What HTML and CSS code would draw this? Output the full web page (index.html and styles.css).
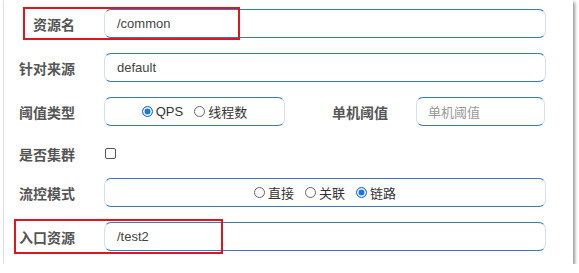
FILE: index.html
```html
<!DOCTYPE html>
<html lang="zh-CN">
<head>
    <meta charset="UTF-8">
    <title>新增流控规则</title>
    <link rel="stylesheet" href="styles.css">
</head>
<body>
    <div class="panel">
        <div class="row">
            <label class="row-label">资源名</label>
            <div class="field">/common</div>
            <div class="mark mark-top"></div>
        </div>

        <div class="row">
            <label class="row-label">针对来源</label>
            <div class="field">default</div>
        </div>

        <div class="row">
            <label class="row-label">阈值类型</label>
            <div class="field field-radios field-short">
                <span class="opt"><span class="dot checked"></span>QPS</span>
                <span class="opt"><span class="dot"></span>线程数</span>
            </div>
            <label class="row-label side-label">单机阈值</label>
            <div class="field field-count placeholder">单机阈值</div>
        </div>

        <div class="row row-check">
            <label class="row-label">是否集群</label>
            <span class="check"></span>
        </div>

        <div class="row">
            <label class="row-label">流控模式</label>
            <div class="field field-radios">
                <span class="opt"><span class="dot"></span>直接</span>
                <span class="opt"><span class="dot"></span>关联</span>
                <span class="opt"><span class="dot checked"></span>链路</span>
            </div>
        </div>

        <div class="row">
            <label class="row-label">入口资源</label>
            <div class="field">/test2</div>
            <div class="mark mark-bottom"></div>
        </div>
    </div>
</body>
</html>
```

FILE: styles.css
```css
body {
    margin: 0;
    background: #fff;
    font-family: "Liberation Sans", "Noto Sans CJK SC", sans-serif;
}
.panel {
    margin-left: 3px;
    width: 542px;
    height: 255px;
    padding: 9px 27px 0 0;
    border-left: 1px solid #e2e2e2;
    background: #fff;
    box-shadow: 2px 2px 3px rgba(0, 0, 0, 0.4);
}
.row {
    position: relative;
    display: flex;
    align-items: center;
    height: 29px;
    margin-bottom: 15px;
}
.row-check {
    height: 25px;
    margin-top: 3px;
    margin-bottom: 12px;
}
.row-label {
    width: 71px;
    flex: none;
    margin-right: 29px;
    text-align: right;
    font-size: 14px;
    font-weight: bold;
    color: #555;
}
.field {
    flex: 1;
    height: 27px;
    box-sizing: border-box;
    height: 29px;
    padding: 0 12px;
    display: flex;
    align-items: center;
    border: 1px solid #3a7ab8;
    border-left-color: #d3e1ef;
    border-right-color: #d3e1ef;
    border-radius: 7px;
    font-size: 13px;
    color: #444;
}
.field-short {
    flex: none;
    width: 181px;
}
.side-label {
    width: auto;
    margin: 0 28px 0 47px;
}
.field-count {
    flex: none;
    width: 129px;
    padding-left: 11px;
}
.placeholder {
    color: #999;
}
.field-radios {
    justify-content: center;
    gap: 11px;
    color: #333;
}
.opt {
    display: flex;
    align-items: center;
}
.dot {
    width: 9px;
    height: 9px;
    margin-right: 3px;
    border: 1px solid #666;
    border-radius: 50%;
}
.dot.checked {
    border-color: #1a73e8;
    background: #1a73e8;
    box-shadow: inset 0 0 0 1.5px #fff;
}
.check {
    width: 9px;
    height: 9px;
    margin-left: 1px;
    border: 1px solid #555;
    border-radius: 2px;
}
.mark {
    position: absolute;
    border: 2px solid #e0151f;
    pointer-events: none;
}
.mark-top {
    left: 19px;
    top: -2px;
    width: 213px;
    height: 29px;
}
.mark-bottom {
    left: 10px;
    top: -3px;
    width: 205px;
    height: 31px;
}
```
